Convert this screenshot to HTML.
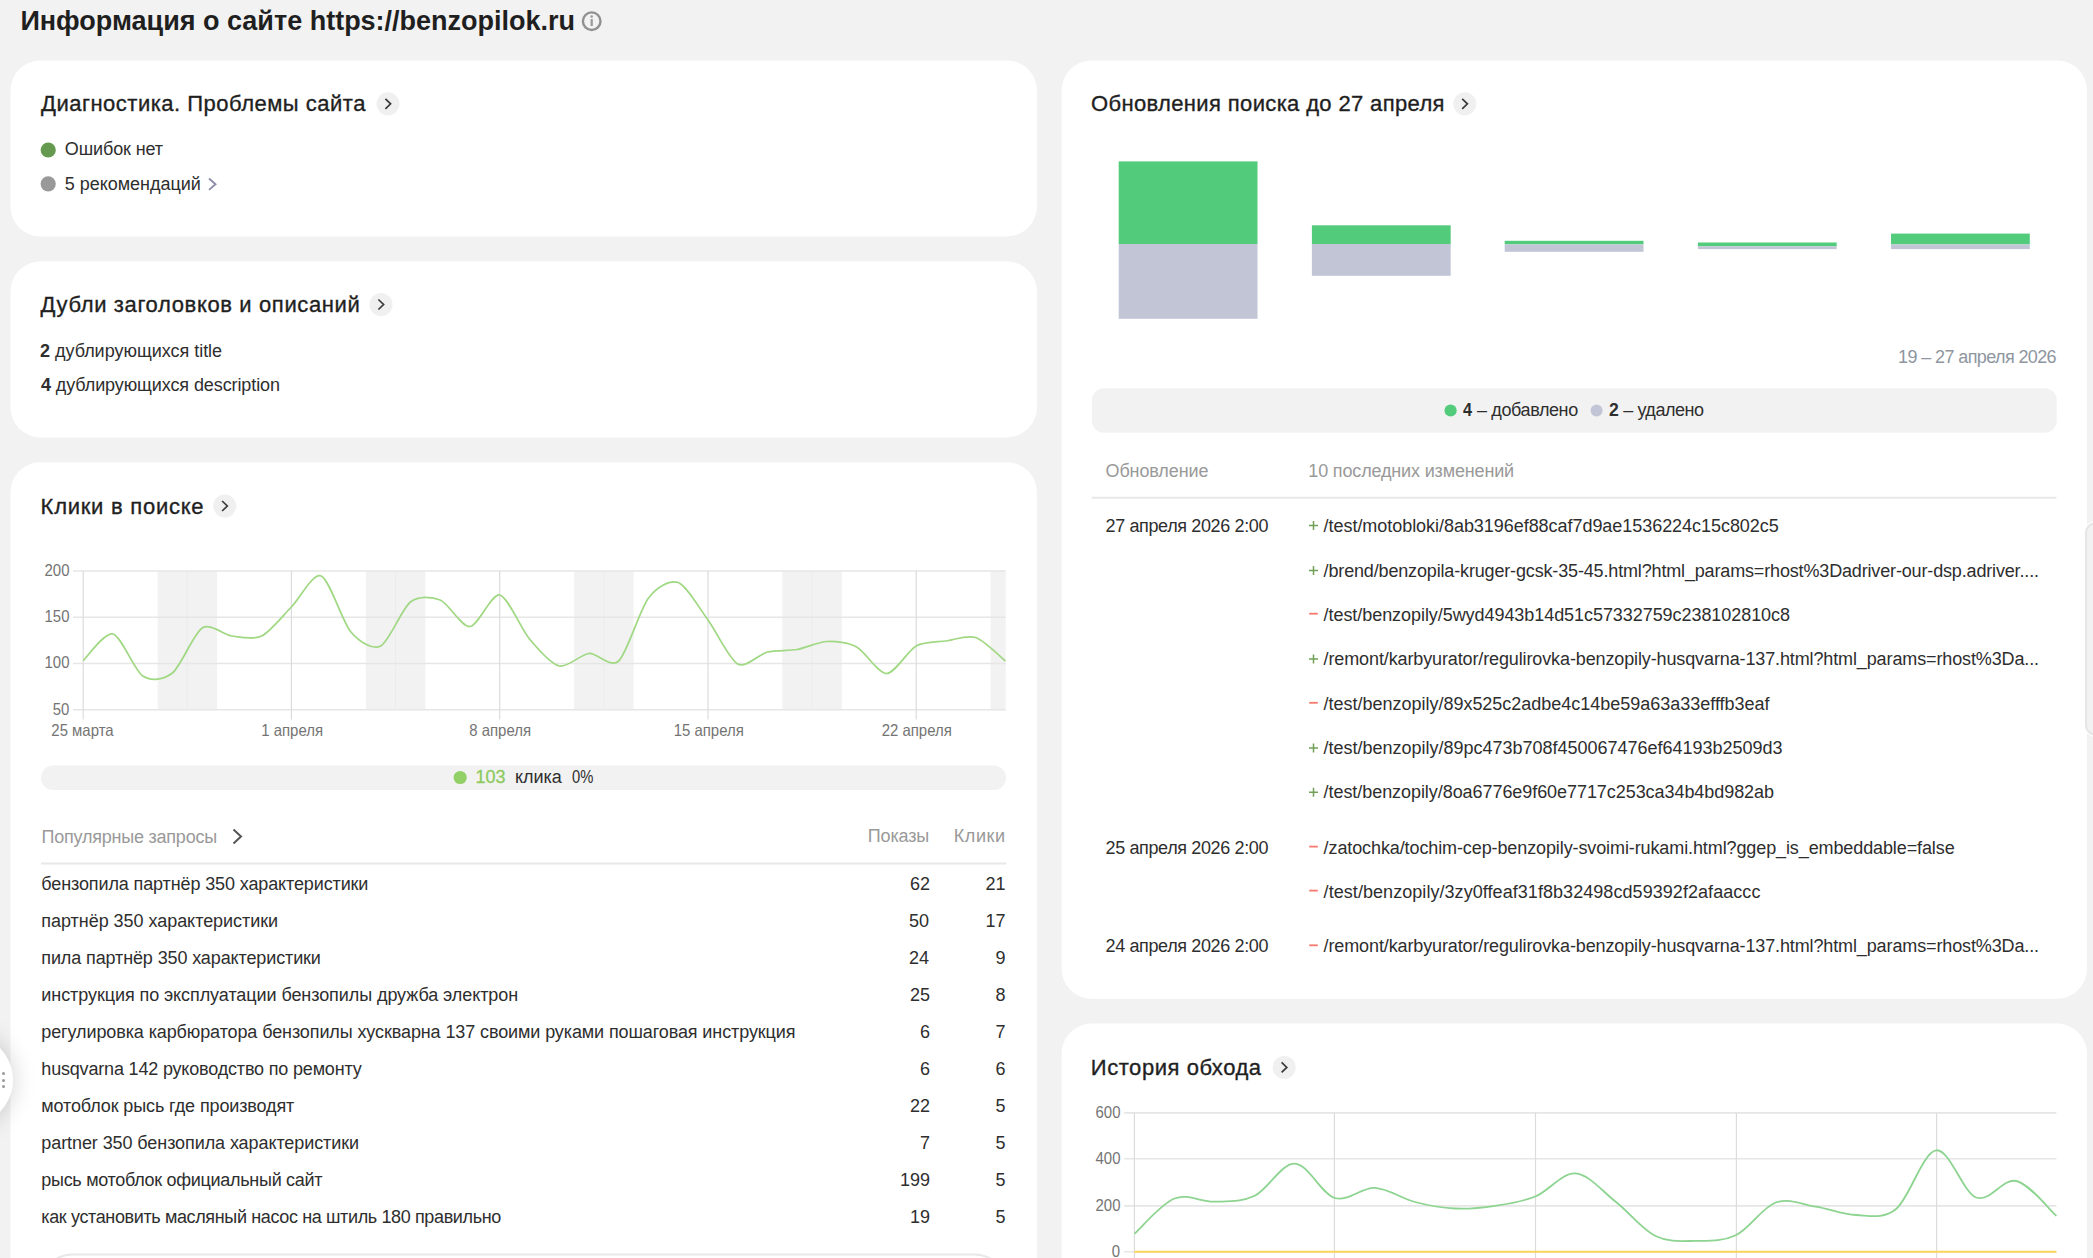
<!DOCTYPE html>
<html><head><meta charset="utf-8"><style>
html,body{margin:0;padding:0;}
body{width:2093px;height:1258px;overflow:hidden;background:#f2f2f2;position:relative;font-family:'Liberation Sans',sans-serif;}
.card{position:absolute;background:#fff;border-radius:30px;}
.t{position:absolute;white-space:nowrap;font-family:'Liberation Sans',sans-serif;}
.t b{font-weight:bold;}
svg.l{position:absolute;left:0;top:0;}
.hd{position:absolute;left:2.2px;width:3px;height:3px;border-radius:50%;background:#9a9a9a;}
</style></head><body>
<svg class="l" width="2093" height="1258" viewBox="0 0 2093 1258">
<rect x="10.5" y="60.4" width="1026.4" height="176.1" rx="30" fill="#fff"/>
<rect x="10.5" y="261.5" width="1026.4" height="175.9" rx="30" fill="#fff"/>
<rect x="10.5" y="462.2" width="1026.4" height="900" rx="30" fill="#fff"/>
<rect x="1061.6" y="60.4" width="1025.4" height="938.3" rx="30" fill="#fff"/>
<rect x="1061.6" y="1023.6" width="1025.4" height="900" rx="30" fill="#fff"/>
<rect x="157.6" y="571" width="59.5" height="138.7" fill="#f2f2f2"/><line x1="187.3" y1="571" x2="187.3" y2="709.7" stroke="#ececec" stroke-width="1"/><rect x="365.8" y="571" width="59.5" height="138.7" fill="#f2f2f2"/><line x1="395.6" y1="571" x2="395.6" y2="709.7" stroke="#ececec" stroke-width="1"/><rect x="574.1" y="571" width="59.5" height="138.7" fill="#f2f2f2"/><line x1="603.8" y1="571" x2="603.8" y2="709.7" stroke="#ececec" stroke-width="1"/><rect x="782.3" y="571" width="59.5" height="138.7" fill="#f2f2f2"/><line x1="812.1" y1="571" x2="812.1" y2="709.7" stroke="#ececec" stroke-width="1"/><rect x="990.6" y="571" width="15.1" height="138.7" fill="#f2f2f2"/><line x1="73" y1="571" x2="1005.7" y2="571" stroke="#e6e6e6" stroke-width="1.6"/><line x1="73" y1="617.2" x2="1005.7" y2="617.2" stroke="#e6e6e6" stroke-width="1.6"/><line x1="73" y1="663.5" x2="1005.7" y2="663.5" stroke="#e6e6e6" stroke-width="1.6"/><line x1="73" y1="709.7" x2="1005.7" y2="709.7" stroke="#e6e6e6" stroke-width="1.6"/><line x1="83.2" y1="571" x2="83.2" y2="719.5" stroke="#dcdcdc" stroke-width="1.2"/><line x1="291.4" y1="571" x2="291.4" y2="719.5" stroke="#dcdcdc" stroke-width="1.2"/><line x1="499.7" y1="571" x2="499.7" y2="719.5" stroke="#dcdcdc" stroke-width="1.2"/><line x1="708.0" y1="571" x2="708.0" y2="719.5" stroke="#dcdcdc" stroke-width="1.2"/><line x1="916.2" y1="571" x2="916.2" y2="719.5" stroke="#dcdcdc" stroke-width="1.2"/><path d="M83.2,660.5 C87.4,656.8 104.6,631.8 113.0,634.0 C121.3,636.2 134.4,670.5 142.7,676.0 C151.0,681.5 164.1,679.7 172.4,673.0 C180.8,666.3 193.9,633.2 202.2,628.0 C210.5,622.8 223.6,634.9 231.9,636.0 C240.3,637.1 253.4,640.1 261.7,636.0 C270.0,631.9 283.1,615.4 291.4,607.0 C299.8,598.6 312.9,572.5 321.2,576.0 C329.5,579.5 342.6,622.2 350.9,632.0 C359.3,641.8 372.4,650.2 380.7,646.0 C389.0,641.8 402.1,608.4 410.4,602.0 C418.8,595.6 431.9,596.6 440.2,600.0 C448.5,603.4 461.6,627.2 469.9,626.5 C478.3,625.8 491.4,593.2 499.7,595.0 C508.0,596.8 521.1,629.1 529.5,639.0 C537.8,648.9 550.9,664.0 559.2,666.0 C567.5,668.0 580.6,654.2 589.0,653.5 C597.3,652.8 610.4,668.8 618.7,661.0 C627.0,653.2 640.1,609.0 648.5,598.0 C656.8,587.0 669.9,579.4 678.2,582.5 C686.5,585.6 699.6,608.6 708.0,620.0 C716.3,631.4 729.4,659.5 737.7,664.0 C746.0,668.5 759.1,654.0 767.5,652.0 C775.8,650.0 788.9,651.0 797.2,649.5 C805.5,648.0 818.6,641.9 827.0,641.5 C835.3,641.1 848.4,642.5 856.7,647.0 C865.0,651.5 878.1,673.6 886.5,673.5 C894.8,673.4 907.9,650.5 916.2,646.0 C924.5,641.5 937.6,642.2 946.0,641.0 C954.3,639.8 967.4,634.7 975.7,637.5 C984.0,640.3 1001.3,657.7 1005.5,661.0" fill="none" stroke="#a0d883" stroke-width="1.75"/>
<line x1="1124.2" y1="1112.9" x2="2056.4" y2="1112.9" stroke="#e6e6e6" stroke-width="1.6"/><line x1="1124.2" y1="1158.7" x2="2056.4" y2="1158.7" stroke="#e6e6e6" stroke-width="1.6"/><line x1="1124.2" y1="1205.9" x2="2056.4" y2="1205.9" stroke="#e6e6e6" stroke-width="1.6"/><line x1="1124.2" y1="1251.7" x2="2056.4" y2="1251.7" stroke="#e6e6e6" stroke-width="1.6"/><line x1="1134.4" y1="1112.9" x2="1134.4" y2="1260" stroke="#dcdcdc" stroke-width="1.2"/><line x1="1334.4" y1="1112.9" x2="1334.4" y2="1260" stroke="#dcdcdc" stroke-width="1.2"/><line x1="1535.5" y1="1112.9" x2="1535.5" y2="1260" stroke="#dcdcdc" stroke-width="1.2"/><line x1="1736.4" y1="1112.9" x2="1736.4" y2="1260" stroke="#dcdcdc" stroke-width="1.2"/><line x1="1936.6" y1="1112.9" x2="1936.6" y2="1260" stroke="#dcdcdc" stroke-width="1.2"/><path d="M1134.4,1233.8 C1141.1,1227.9 1161.1,1203.8 1174.5,1198.5 C1187.8,1193.2 1201.2,1202.2 1214.6,1201.7 C1227.9,1201.2 1241.3,1202.2 1254.7,1195.8 C1268.0,1189.4 1281.4,1163.2 1294.7,1163.6 C1308.1,1164.0 1321.5,1194.0 1334.8,1198.0 C1348.2,1202.0 1361.6,1187.1 1374.9,1187.8 C1388.3,1188.5 1401.6,1198.5 1415.0,1202.0 C1428.4,1205.5 1441.7,1207.9 1455.1,1208.5 C1468.5,1209.1 1481.8,1207.8 1495.2,1205.8 C1508.5,1203.8 1521.9,1201.9 1535.3,1196.5 C1548.6,1191.1 1562.0,1172.6 1575.4,1173.4 C1588.7,1174.2 1602.1,1191.1 1615.4,1201.5 C1628.8,1211.9 1642.2,1229.4 1655.5,1236.0 C1668.9,1242.6 1682.3,1241.0 1695.6,1240.9 C1709.0,1240.8 1722.3,1241.7 1735.7,1235.3 C1749.1,1228.9 1762.4,1207.3 1775.8,1202.5 C1789.2,1197.7 1802.5,1204.6 1815.9,1206.7 C1829.2,1208.8 1842.6,1214.6 1856.0,1215.0 C1869.3,1215.4 1882.7,1219.8 1896.1,1209.0 C1909.4,1198.2 1922.8,1152.2 1936.1,1150.3 C1949.5,1148.4 1962.9,1192.4 1976.2,1197.5 C1989.6,1202.6 2003.0,1177.9 2016.3,1181.0 C2029.7,1184.1 2049.7,1210.1 2056.4,1215.9" fill="none" stroke="#8dd490" stroke-width="1.8"/><line x1="1134.4" y1="1251.7" x2="2056.4" y2="1251.7" stroke="#fdd45a" stroke-width="2"/>
<rect x="1118.7" y="161.4" width="138.8" height="82.6" fill="#52cb7a"/><rect x="1118.7" y="244" width="138.8" height="74.8" fill="#c2c5d6"/><rect x="1311.9" y="225.3" width="138.8" height="18.7" fill="#52cb7a"/><rect x="1311.9" y="244" width="138.8" height="31.8" fill="#c2c5d6"/><rect x="1504.7" y="240.8" width="138.8" height="3.6" fill="#52cb7a"/><rect x="1504.7" y="244.4" width="138.8" height="7.4" fill="#c2c5d6"/><rect x="1697.9" y="242.5" width="138.8" height="3.8" fill="#52cb7a"/><rect x="1697.9" y="246.3" width="138.8" height="2.8" fill="#c2c5d6"/><rect x="1891" y="233.6" width="138.8" height="10.8" fill="#52cb7a"/><rect x="1891" y="244.4" width="138.8" height="4.7" fill="#c2c5d6"/>
<circle cx="388" cy="103.8" r="11.5" fill="#f0f0f0"/><polyline points="385.4,98.8 390.6,103.8 385.4,108.8" fill="none" stroke="#3a3a3a" stroke-width="1.7"/><circle cx="381" cy="304.5" r="11.5" fill="#f0f0f0"/><polyline points="378.4,299.5 383.6,304.5 378.4,309.5" fill="none" stroke="#3a3a3a" stroke-width="1.7"/><circle cx="224.7" cy="506" r="11.5" fill="#f0f0f0"/><polyline points="222.1,501 227.29999999999998,506 222.1,511" fill="none" stroke="#3a3a3a" stroke-width="1.7"/><circle cx="1464.8" cy="103.8" r="11.5" fill="#f0f0f0"/><polyline points="1462.2,98.8 1467.3999999999999,103.8 1462.2,108.8" fill="none" stroke="#3a3a3a" stroke-width="1.7"/><circle cx="1284.2" cy="1067.4" r="11.5" fill="#f0f0f0"/><polyline points="1281.6000000000001,1062.4 1286.8,1067.4 1281.6000000000001,1072.4" fill="none" stroke="#3a3a3a" stroke-width="1.7"/><circle cx="591.7" cy="21.2" r="8.8" fill="none" stroke="#909090" stroke-width="2.4"/><circle cx="591.7" cy="16.5" r="1.3" fill="#999"/><rect x="590.6" y="19" width="2.2" height="7" fill="#999"/><circle cx="48.2" cy="150" r="7.6" fill="#65994f"/><circle cx="48.2" cy="183.8" r="7.6" fill="#999"/><polyline points="209,178.5 215.5,184.2 209,189.9" fill="none" stroke="#8d8dab" stroke-width="1.9"/><rect x="41" y="765.5" width="965" height="24.5" rx="12.25" fill="#f2f2f2"/><circle cx="460.2" cy="777.5" r="6.6" fill="#93d067"/><polyline points="233.5,829.5 241,836.5 233.5,843.5" fill="none" stroke="#555" stroke-width="2"/><line x1="41" y1="863.6" x2="1006.4" y2="863.6" stroke="#e8e8e8" stroke-width="2"/><rect x="42" y="1254.5" width="963" height="60" rx="30" fill="none" stroke="#e8e8e8" stroke-width="2"/><rect x="1092" y="388.2" width="964.7" height="44.6" rx="12" fill="#f2f2f2"/><circle cx="1450.6" cy="410.5" r="6.1" fill="#52cb7a"/><circle cx="1596.6" cy="410.5" r="6.0" fill="#c2c5d6"/><line x1="1091.7" y1="497.7" x2="2056.4" y2="497.7" stroke="#e8e8e8" stroke-width="2"/><path d="M1309,525.5 H1318 M1313.5,521.0 V530.0" stroke="#72a058" stroke-width="1.5" fill="none"/><path d="M1309,570.5 H1318 M1313.5,566.0 V575.0" stroke="#72a058" stroke-width="1.5" fill="none"/><path d="M1309.2,613.7 H1317.8" stroke="#f47b6d" stroke-width="1.8" fill="none"/><path d="M1309,659.0999999999999 H1318 M1313.5,654.5999999999999 V663.5999999999999" stroke="#72a058" stroke-width="1.5" fill="none"/><path d="M1309.2,702.8 H1317.8" stroke="#f47b6d" stroke-width="1.8" fill="none"/><path d="M1309,748.0999999999999 H1318 M1313.5,743.5999999999999 V752.5999999999999" stroke="#72a058" stroke-width="1.5" fill="none"/><path d="M1309,792.1999999999999 H1318 M1313.5,787.6999999999999 V796.6999999999999" stroke="#72a058" stroke-width="1.5" fill="none"/><path d="M1309.2,846.6 H1317.8" stroke="#f47b6d" stroke-width="1.8" fill="none"/><path d="M1309.2,890.6 H1317.8" stroke="#f47b6d" stroke-width="1.8" fill="none"/><path d="M1309.2,945.3 H1317.8" stroke="#f47b6d" stroke-width="1.8" fill="none"/>
</svg>
<div class="t" style="left:20.40px;top:8.40px;font-size:27px;line-height:27px;font-weight:bold;color:#1f1f1f;letter-spacing:-0.006px;">Информация о сайте https://benzopilok.ru</div>
<div class="t" style="left:41.00px;top:93.40px;font-size:22px;line-height:22px;font-weight:normal;color:#1f1f1f;letter-spacing:0.5px;-webkit-text-stroke:0.35px #1f1f1f;">Диагностика. Проблемы сайта</div>
<div class="t" style="left:40.60px;top:294.40px;font-size:22px;line-height:22px;font-weight:normal;color:#1f1f1f;letter-spacing:0.631px;-webkit-text-stroke:0.35px #1f1f1f;">Дубли заголовков и описаний</div>
<div class="t" style="left:40.60px;top:495.60px;font-size:22px;line-height:22px;font-weight:normal;color:#1f1f1f;letter-spacing:0.738px;-webkit-text-stroke:0.35px #1f1f1f;">Клики в поиске</div>
<div class="t" style="left:1091.00px;top:93.10px;font-size:22px;line-height:22px;font-weight:normal;color:#1f1f1f;letter-spacing:0.359px;-webkit-text-stroke:0.35px #1f1f1f;">Обновления поиска до 27 апреля</div>
<div class="t" style="left:1090.80px;top:1056.70px;font-size:22px;line-height:22px;font-weight:normal;color:#1f1f1f;letter-spacing:0.554px;-webkit-text-stroke:0.35px #1f1f1f;">История обхода</div>
<div class="t" style="left:64.80px;top:140.30px;font-size:18px;line-height:18px;font-weight:normal;color:#2e2e2e;letter-spacing:-0.112px;">Ошибок нет</div>
<div class="t" style="left:64.80px;top:175.20px;font-size:18px;line-height:18px;font-weight:normal;color:#2e2e2e;letter-spacing:-0.03px;">5 рекомендаций</div>
<div class="t" style="left:40.00px;top:341.60px;font-size:18px;line-height:18px;font-weight:normal;color:#2e2e2e;letter-spacing:-0.02px;"><b>2</b> дублирующихся title</div>
<div class="t" style="left:41.00px;top:376.00px;font-size:18px;line-height:18px;font-weight:normal;color:#2e2e2e;letter-spacing:-0.1px;"><b>4</b> дублирующихся description</div>
<div class="t" style="left:475.50px;top:768.20px;font-size:18px;line-height:18px;font-weight:normal;color:#8dca5f;letter-spacing:0.0px;-webkit-text-stroke:0.3px #8dca5f;">103</div>
<div class="t" style="left:515.00px;top:768.20px;font-size:18px;line-height:18px;font-weight:normal;color:#2e2e2e;letter-spacing:-0.05px;">клика</div>
<div class="t" style="left:571.58px;top:768.20px;font-size:18px;line-height:18px;font-weight:normal;color:#2e2e2e;letter-spacing:0.0px;transform:scaleX(0.8200);transform-origin:0 0;">0%</div>
<div class="t" style="left:41.50px;top:827.60px;font-size:18px;line-height:18px;font-weight:normal;color:#999;letter-spacing:-0.223px;">Популярные запросы</div>
<div class="t" style="left:867.80px;top:827.30px;font-size:18px;line-height:18px;font-weight:normal;color:#999;letter-spacing:-0.16px;">Показы</div>
<div class="t" style="left:953.80px;top:827.30px;font-size:18px;line-height:18px;font-weight:normal;color:#999;letter-spacing:0.55px;">Клики</div>
<div class="t" style="left:41.30px;top:874.50px;font-size:18px;line-height:18px;font-weight:normal;color:#2e2e2e;letter-spacing:-0.12px;">бензопила партнёр 350 характеристики</div>
<div class="t" style="left:909.90px;top:874.50px;font-size:18px;line-height:18px;font-weight:normal;color:#2e2e2e;letter-spacing:0.0px;">62</div>
<div class="t" style="left:985.40px;top:874.50px;font-size:18px;line-height:18px;font-weight:normal;color:#2e2e2e;letter-spacing:0.0px;">21</div>
<div class="t" style="left:41.30px;top:911.50px;font-size:18px;line-height:18px;font-weight:normal;color:#2e2e2e;letter-spacing:-0.04px;">партнёр 350 характеристики</div>
<div class="t" style="left:908.90px;top:911.50px;font-size:18px;line-height:18px;font-weight:normal;color:#2e2e2e;letter-spacing:0.0px;">50</div>
<div class="t" style="left:985.40px;top:911.50px;font-size:18px;line-height:18px;font-weight:normal;color:#2e2e2e;letter-spacing:0.0px;">17</div>
<div class="t" style="left:41.30px;top:948.50px;font-size:18px;line-height:18px;font-weight:normal;color:#2e2e2e;letter-spacing:-0.12px;">пила партнёр 350 характеристики</div>
<div class="t" style="left:908.90px;top:948.50px;font-size:18px;line-height:18px;font-weight:normal;color:#2e2e2e;letter-spacing:0.0px;">24</div>
<div class="t" style="left:995.40px;top:948.50px;font-size:18px;line-height:18px;font-weight:normal;color:#2e2e2e;letter-spacing:0.0px;">9</div>
<div class="t" style="left:41.30px;top:985.50px;font-size:18px;line-height:18px;font-weight:normal;color:#2e2e2e;letter-spacing:-0.078px;">инструкция по эксплуатации бензопилы дружба электрон</div>
<div class="t" style="left:909.90px;top:985.50px;font-size:18px;line-height:18px;font-weight:normal;color:#2e2e2e;letter-spacing:0.0px;">25</div>
<div class="t" style="left:995.40px;top:985.50px;font-size:18px;line-height:18px;font-weight:normal;color:#2e2e2e;letter-spacing:0.0px;">8</div>
<div class="t" style="left:41.30px;top:1022.50px;font-size:18px;line-height:18px;font-weight:normal;color:#2e2e2e;letter-spacing:-0.106px;">регулировка карбюратора бензопилы хускварна 137 своими руками пошаговая инструкция</div>
<div class="t" style="left:919.90px;top:1022.50px;font-size:18px;line-height:18px;font-weight:normal;color:#2e2e2e;letter-spacing:0.0px;">6</div>
<div class="t" style="left:995.40px;top:1022.50px;font-size:18px;line-height:18px;font-weight:normal;color:#2e2e2e;letter-spacing:0.0px;">7</div>
<div class="t" style="left:41.30px;top:1059.50px;font-size:18px;line-height:18px;font-weight:normal;color:#2e2e2e;letter-spacing:-0.178px;">husqvarna 142 руководство по ремонту</div>
<div class="t" style="left:919.90px;top:1059.50px;font-size:18px;line-height:18px;font-weight:normal;color:#2e2e2e;letter-spacing:0.0px;">6</div>
<div class="t" style="left:995.40px;top:1059.50px;font-size:18px;line-height:18px;font-weight:normal;color:#2e2e2e;letter-spacing:0.0px;">6</div>
<div class="t" style="left:41.30px;top:1096.50px;font-size:18px;line-height:18px;font-weight:normal;color:#2e2e2e;letter-spacing:-0.119px;">мотоблок рысь где производят</div>
<div class="t" style="left:909.90px;top:1096.50px;font-size:18px;line-height:18px;font-weight:normal;color:#2e2e2e;letter-spacing:0.0px;">22</div>
<div class="t" style="left:995.40px;top:1096.50px;font-size:18px;line-height:18px;font-weight:normal;color:#2e2e2e;letter-spacing:0.0px;">5</div>
<div class="t" style="left:41.30px;top:1133.50px;font-size:18px;line-height:18px;font-weight:normal;color:#2e2e2e;letter-spacing:-0.086px;">partner 350 бензопила характеристики</div>
<div class="t" style="left:919.90px;top:1133.50px;font-size:18px;line-height:18px;font-weight:normal;color:#2e2e2e;letter-spacing:0.0px;">7</div>
<div class="t" style="left:995.40px;top:1133.50px;font-size:18px;line-height:18px;font-weight:normal;color:#2e2e2e;letter-spacing:0.0px;">5</div>
<div class="t" style="left:41.30px;top:1170.50px;font-size:18px;line-height:18px;font-weight:normal;color:#2e2e2e;letter-spacing:-0.297px;">рысь мотоблок официальный сайт</div>
<div class="t" style="left:899.90px;top:1170.50px;font-size:18px;line-height:18px;font-weight:normal;color:#2e2e2e;letter-spacing:0.0px;">199</div>
<div class="t" style="left:995.40px;top:1170.50px;font-size:18px;line-height:18px;font-weight:normal;color:#2e2e2e;letter-spacing:0.0px;">5</div>
<div class="t" style="left:41.30px;top:1207.50px;font-size:18px;line-height:18px;font-weight:normal;color:#2e2e2e;letter-spacing:-0.369px;">как установить масляный насос на штиль 180 правильно</div>
<div class="t" style="left:909.90px;top:1207.50px;font-size:18px;line-height:18px;font-weight:normal;color:#2e2e2e;letter-spacing:0.0px;">19</div>
<div class="t" style="left:995.40px;top:1207.50px;font-size:18px;line-height:18px;font-weight:normal;color:#2e2e2e;letter-spacing:0.0px;">5</div>
<div class="t" style="left:1898.10px;top:347.60px;font-size:18px;line-height:18px;font-weight:normal;color:#8e96a0;letter-spacing:-0.611px;">19 – 27 апреля 2026</div>
<div class="t" style="left:1463.30px;top:401.30px;font-size:18px;line-height:18px;font-weight:normal;color:#2e2e2e;letter-spacing:0.0px;transform:scaleX(0.9000);transform-origin:0 0;"><b>4</b></div>
<div class="t" style="left:1477.10px;top:401.30px;font-size:18px;line-height:18px;font-weight:normal;color:#2e2e2e;letter-spacing:-0.4px;">– добавлено</div>
<div class="t" style="left:1608.92px;top:401.30px;font-size:18px;line-height:18px;font-weight:normal;color:#2e2e2e;letter-spacing:0.0px;transform:scaleX(0.9778);transform-origin:0 0;"><b>2</b></div>
<div class="t" style="left:1623.30px;top:401.30px;font-size:18px;line-height:18px;font-weight:normal;color:#2e2e2e;letter-spacing:-0.449px;">– удалено</div>
<div class="t" style="left:1105.50px;top:461.50px;font-size:18px;line-height:18px;font-weight:normal;color:#999;letter-spacing:-0.112px;">Обновление</div>
<div class="t" style="left:1308.30px;top:461.50px;font-size:18px;line-height:18px;font-weight:normal;color:#999;letter-spacing:-0.153px;">10 последних изменений</div>
<div class="t" style="left:1323.60px;top:516.70px;font-size:18px;line-height:18px;font-weight:normal;color:#2e2e2e;letter-spacing:-0.044px;">/test/motobloki/8ab3196ef88caf7d9ae1536224c15c802c5</div>
<div class="t" style="left:1323.60px;top:561.70px;font-size:18px;line-height:18px;font-weight:normal;color:#2e2e2e;letter-spacing:-0.156px;">/brend/benzopila-kruger-gcsk-35-45.html?html_params=rhost%3Dadriver-our-dsp.adriver....</div>
<div class="t" style="left:1323.60px;top:605.70px;font-size:18px;line-height:18px;font-weight:normal;color:#2e2e2e;letter-spacing:-0.06px;">/test/benzopily/5wyd4943b14d51c57332759c238102810c8</div>
<div class="t" style="left:1323.60px;top:650.30px;font-size:18px;line-height:18px;font-weight:normal;color:#2e2e2e;letter-spacing:-0.123px;">/remont/karbyurator/regulirovka-benzopily-husqvarna-137.html?html_params=rhost%3Da...</div>
<div class="t" style="left:1323.60px;top:694.80px;font-size:18px;line-height:18px;font-weight:normal;color:#2e2e2e;letter-spacing:-0.016px;">/test/benzopily/89x525c2adbe4c14be59a63a33efffb3eaf</div>
<div class="t" style="left:1323.60px;top:739.30px;font-size:18px;line-height:18px;font-weight:normal;color:#2e2e2e;letter-spacing:-0.008px;">/test/benzopily/89pc473b708f450067476ef64193b2509d3</div>
<div class="t" style="left:1323.60px;top:783.40px;font-size:18px;line-height:18px;font-weight:normal;color:#2e2e2e;letter-spacing:-0.061px;">/test/benzopily/8oa6776e9f60e7717c253ca34b4bd982ab</div>
<div class="t" style="left:1323.60px;top:838.60px;font-size:18px;line-height:18px;font-weight:normal;color:#2e2e2e;letter-spacing:-0.106px;">/zatochka/tochim-cep-benzopily-svoimi-rukami.html?ggep_is_embeddable=false</div>
<div class="t" style="left:1323.60px;top:882.60px;font-size:18px;line-height:18px;font-weight:normal;color:#2e2e2e;letter-spacing:0.056px;">/test/benzopily/3zy0ffeaf31f8b32498cd59392f2afaaccc</div>
<div class="t" style="left:1323.60px;top:937.30px;font-size:18px;line-height:18px;font-weight:normal;color:#2e2e2e;letter-spacing:-0.123px;">/remont/karbyurator/regulirovka-benzopily-husqvarna-137.html?html_params=rhost%3Da...</div>
<div class="t" style="left:1105.50px;top:516.70px;font-size:18px;line-height:18px;font-weight:normal;color:#2e2e2e;letter-spacing:-0.367px;">27 апреля 2026 2:00</div>
<div class="t" style="left:1105.50px;top:838.60px;font-size:18px;line-height:18px;font-weight:normal;color:#2e2e2e;letter-spacing:-0.367px;">25 апреля 2026 2:00</div>
<div class="t" style="left:1105.50px;top:937.30px;font-size:18px;line-height:18px;font-weight:normal;color:#2e2e2e;letter-spacing:-0.367px;">24 апреля 2026 2:00</div>
<div class="t" style="left:42.10px;top:561.80px;font-size:16.5px;line-height:16.5px;font-weight:normal;color:#747474;letter-spacing:0.0px;transform:scaleX(0.9050);transform-origin:27.00px 0;">200</div>
<div class="t" style="left:42.10px;top:608.00px;font-size:16.5px;line-height:16.5px;font-weight:normal;color:#747474;letter-spacing:0.0px;transform:scaleX(0.9050);transform-origin:27.00px 0;">150</div>
<div class="t" style="left:42.10px;top:654.30px;font-size:16.5px;line-height:16.5px;font-weight:normal;color:#747474;letter-spacing:0.0px;transform:scaleX(0.9050);transform-origin:27.00px 0;">100</div>
<div class="t" style="left:51.10px;top:700.50px;font-size:16.5px;line-height:16.5px;font-weight:normal;color:#747474;letter-spacing:0.0px;transform:scaleX(0.9050);transform-origin:18.00px 0;">50</div>
<div class="t" style="left:48.20px;top:722.30px;font-size:16.5px;line-height:16.5px;font-weight:normal;color:#747474;letter-spacing:0.0px;transform:scaleX(0.9050);transform-origin:35.00px 0;">25 марта</div>
<div class="t" style="left:257.50px;top:722.30px;font-size:16.5px;line-height:16.5px;font-weight:normal;color:#747474;letter-spacing:0.0px;transform:scaleX(0.9050);transform-origin:34.00px 0;">1 апреля</div>
<div class="t" style="left:466.20px;top:722.30px;font-size:16.5px;line-height:16.5px;font-weight:normal;color:#747474;letter-spacing:0.0px;transform:scaleX(0.9050);transform-origin:34.00px 0;">8 апреля</div>
<div class="t" style="left:669.50px;top:722.30px;font-size:16.5px;line-height:16.5px;font-weight:normal;color:#747474;letter-spacing:0.0px;transform:scaleX(0.9050);transform-origin:39.00px 0;">15 апреля</div>
<div class="t" style="left:877.50px;top:722.30px;font-size:16.5px;line-height:16.5px;font-weight:normal;color:#747474;letter-spacing:0.0px;transform:scaleX(0.9050);transform-origin:39.00px 0;">22 апреля</div>
<div class="t" style="left:1093.20px;top:1103.90px;font-size:16.5px;line-height:16.5px;font-weight:normal;color:#747474;letter-spacing:0.0px;transform:scaleX(0.9050);transform-origin:27.00px 0;">600</div>
<div class="t" style="left:1093.20px;top:1149.70px;font-size:16.5px;line-height:16.5px;font-weight:normal;color:#747474;letter-spacing:0.0px;transform:scaleX(0.9050);transform-origin:27.00px 0;">400</div>
<div class="t" style="left:1093.20px;top:1196.90px;font-size:16.5px;line-height:16.5px;font-weight:normal;color:#747474;letter-spacing:0.0px;transform:scaleX(0.9050);transform-origin:27.00px 0;">200</div>
<div class="t" style="left:1111.20px;top:1242.70px;font-size:16.5px;line-height:16.5px;font-weight:normal;color:#747474;letter-spacing:0.0px;transform:scaleX(0.9050);transform-origin:9.00px 0;">0</div>
<div style="position:absolute;left:2085px;top:521.5px;width:40px;height:214px;border-radius:11px;background:#f2f2f2;border:2px solid #e6e6e6;box-sizing:border-box;box-shadow:0 0 0 1px #fff"></div><div style="position:absolute;left:-79px;top:1033.5px;width:92px;height:92px;border-radius:50%;background:#fff;box-shadow:0 0 24px rgba(0,0,0,0.18)"></div><div class="hd" style="top:1072.4px"></div><div class="hd" style="top:1078.7px"></div><div class="hd" style="top:1085px"></div>
</body></html>
